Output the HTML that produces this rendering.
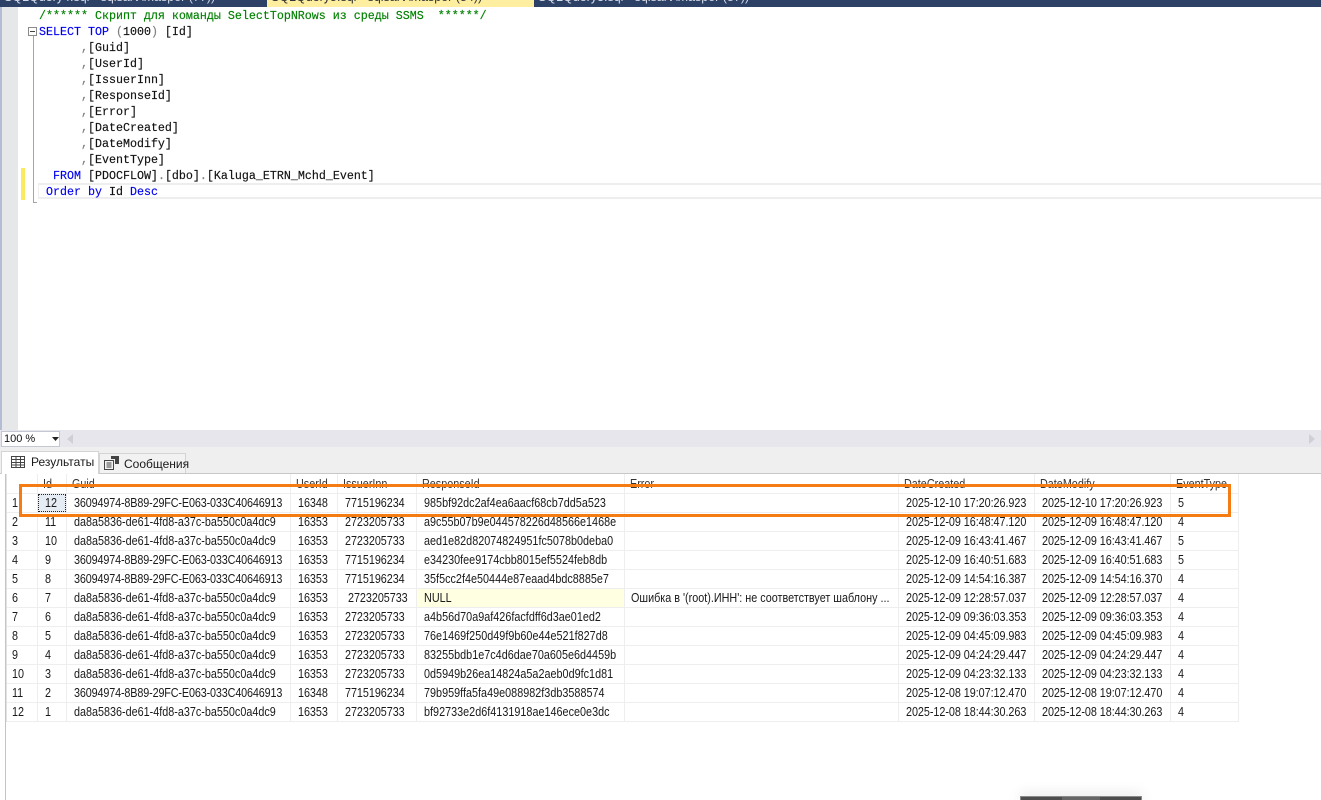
<!DOCTYPE html>
<html><head><meta charset="utf-8">
<style>
html,body{margin:0;padding:0;background:#fff;width:1321px;height:800px;overflow:hidden}
.a{position:absolute}
.c{position:absolute;left:39px;font:11.67px/16px "Liberation Mono",monospace;color:#111;white-space:pre;height:16px;margin-top:1px;-webkit-text-stroke:.15px currentColor}
.k{color:#0000f0}.g{color:#808080}.m{color:#008000}
.t{position:absolute;font:12.5px/19px "Liberation Sans",sans-serif;color:#1a1a1a;white-space:pre;height:19px;letter-spacing:-.05px;transform:scaleX(.864);transform-origin:0 0}
.t[style*="left:74px"]{letter-spacing:0}
.t.u[style*="left:74px"]{letter-spacing:-.157px}
.t[style*="left:424px"]{letter-spacing:.02px}
.t[style*="left:631px"]{letter-spacing:0}
.vl{position:absolute;top:474px;height:248px;width:1px;background:#eeeeee}
.hl{position:absolute;left:7px;width:1232px;height:1px;background:#eeeeee}
.t.h{color:#333;top:475px;letter-spacing:0}
.tt{position:absolute;top:-9px;font:12.5px/12px "Liberation Sans",sans-serif;white-space:pre;color:#d5dbe8}
</style></head><body>
<div id="r" class="a" style="left:0;top:0;width:1321px;height:800px;overflow:hidden">

<div class="a" style="left:0;top:0;width:1321px;height:7px;background:#2d4166"></div>
<div class="a" style="left:267px;top:0;width:267px;height:7px;background:#fdef9f"></div>
<div class="tt" style="left:4px">SQLQuery4.sql - sqlsarv\maspor (77))</div>
<div class="tt" style="left:271px;color:#333">SQLQuery5.sql - sqlsarv\maspor (84))</div>
<div class="tt" style="left:538px">SQLQuery3.sql - sqlsarv\maspor (87))</div>

<div class="a" style="left:0;top:7px;width:2px;height:423px;background:#b4bdd4"></div>
<div class="a" style="left:2px;top:7px;width:16px;height:423px;background:#e6e7e8"></div>
<div class="a" style="left:21px;top:168px;width:4px;height:32px;background:#fbe95f"></div>

<div class="a" style="left:28px;top:27px;width:9px;height:9px;border:1px solid #8a8a8a;box-sizing:border-box;background:#fff"></div>
<div class="a" style="left:30px;top:31px;width:5px;height:1px;background:#444"></div>
<div class="a" style="left:33px;top:36px;width:1px;height:167px;background:#a5a5a5"></div>
<div class="a" style="left:33px;top:202px;width:4px;height:1px;background:#a5a5a5"></div>

<div class="a" style="left:38px;top:183px;width:1283px;height:16px;box-sizing:border-box;border:1px solid #eeeeee;border-width:2px 0 2px 1px"></div>

<div class="c" style="top:7px"><span class="m">/****** Скрипт для команды SelectTopNRows из среды SSMS  ******/</span></div>
<div class="c" style="top:23px"><span class="k">SELECT TOP</span> <span class="g">(</span>1000<span class="g">)</span> [Id]</div>
<div class="c" style="top:39px">      <span class="g">,</span>[Guid]</div>
<div class="c" style="top:55px">      <span class="g">,</span>[UserId]</div>
<div class="c" style="top:71px">      <span class="g">,</span>[IssuerInn]</div>
<div class="c" style="top:87px">      <span class="g">,</span>[ResponseId]</div>
<div class="c" style="top:103px">      <span class="g">,</span>[Error]</div>
<div class="c" style="top:119px">      <span class="g">,</span>[DateCreated]</div>
<div class="c" style="top:135px">      <span class="g">,</span>[DateModify]</div>
<div class="c" style="top:151px">      <span class="g">,</span>[EventType]</div>
<div class="c" style="top:167px">  <span class="k">FROM</span> [PDOCFLOW]<span class="g">.</span>[dbo]<span class="g">.</span>[Kaluga_ETRN_Mchd_Event]</div>
<div class="c" style="top:183px;left:46px"><span class="k">Order by</span> Id <span class="k">Desc</span></div>

<div class="a" style="left:0;top:430px;width:1321px;height:17px;background:#e6e6ec"></div>
<div class="a" style="left:1px;top:431px;width:59px;height:16px;box-sizing:border-box;background:#fff;border:1px solid #c4c8d2"></div>
<div class="a" style="left:4px;top:432px;font:11px/15px 'Liberation Sans',sans-serif;color:#111">100 %</div>
<svg class="a" style="left:52px;top:437px" width="7" height="4"><path d="M0 0H7L3.500 4Z" fill="#222"/></svg>
<svg class="a" style="left:67px;top:434px" width="6" height="10"><path d="M6 0V10L0 5Z" fill="#cfd0d6"/></svg>
<svg class="a" style="left:1309px;top:434px" width="6" height="10"><path d="M0 0V10L6 5Z" fill="#cfd0d6"/></svg>

<div class="a" style="left:0;top:447px;width:1321px;height:26px;background:#efefef"></div>
<div class="a" style="left:0;top:473px;width:1321px;height:1px;background:#c8c8c8"></div>
<div class="a" style="left:0;top:474px;width:6px;height:326px;background:#fff"></div>
<div class="a" style="left:5px;top:474px;width:1px;height:326px;background:#c4c4c4"></div>

<div class="a" style="left:1px;top:451px;width:98px;height:23px;box-sizing:border-box;background:#fff;border:1px solid #d4d4d4;border-bottom:none"></div>
<svg class="a" style="left:11px;top:456px" width="14" height="12"><path d="M.5.5H13.500V11.500H.5ZM.5 3.500H13.500M.5 6.500H13.500M.5 9H13.500M5 .5V11.500M9.500 .5V11.500" fill="none" stroke="#444"/></svg>
<div class="a" style="left:31px;top:453px;font:12px/18px 'Liberation Sans',sans-serif;color:#1a1a1a">Результаты</div>
<div class="a" style="left:99px;top:453px;width:87px;height:20px;box-sizing:border-box;background:#f2f2f2;border:1px solid #d4d4d4;border-bottom:none"></div>
<svg class="a" style="left:104px;top:456px" width="15" height="14"><path d="M.5 4.500H9.500V13.500H.5ZM2.500 7H7.500M2.500 9H7.500M2.500 11H7.500" fill="none" stroke="#444"/><path d="M7 0H15V8H11V3H7Z" fill="#444"/></svg>
<div class="a" style="left:124px;top:455px;font:12px/18px 'Liberation Sans',sans-serif;color:#1a1a1a">Сообщения</div>

<div class="vl" style="left:6px;background:#e2e2e2"></div>
<div class="vl" style="left:37px"></div>
<div class="vl" style="left:66px"></div>
<div class="vl" style="left:290px"></div>
<div class="vl" style="left:337px"></div>
<div class="vl" style="left:416px"></div>
<div class="vl" style="left:624px"></div>
<div class="vl" style="left:898px"></div>
<div class="vl" style="left:1034px"></div>
<div class="vl" style="left:1170px"></div>
<div class="vl" style="left:1238px"></div>
<div class="hl" style="top:493px"></div><div class="hl" style="top:512px"></div><div class="hl" style="top:531px"></div>
<div class="hl" style="top:550px"></div><div class="hl" style="top:569px"></div><div class="hl" style="top:588px"></div>
<div class="hl" style="top:607px"></div><div class="hl" style="top:626px"></div><div class="hl" style="top:645px"></div>
<div class="hl" style="top:664px"></div><div class="hl" style="top:683px"></div><div class="hl" style="top:702px"></div>
<div class="hl" style="top:721px"></div>

<div class="a" style="left:417px;top:589px;width:207px;height:18px;background:#ffffe1"></div>
<div class="a" style="left:38px;top:494px;width:28px;height:18px;box-sizing:border-box;background:#e6ecf3;border:1px dotted #222"></div>

<div class="t h" style="left:43px">Id</div><div class="t h" style="left:72px">Guid</div><div class="t h" style="left:296px">UserId</div><div class="t h" style="left:343px">IssuerInn</div><div class="t h" style="left:422px">ResponseId</div><div class="t h" style="left:630px">Error</div><div class="t h" style="left:904px">DateCreated</div><div class="t h" style="left:1040px">DateModify</div><div class="t h" style="left:1176px">EventType</div>

<div class="t" style="top:494px;left:12px">1</div><div class="t" style="top:494px;left:45px">12</div><div class="t u" style="top:494px;left:74px">36094974-8B89-29FC-E063-033C40646913</div><div class="t" style="top:494px;left:298px">16348</div><div class="t" style="top:494px;left:345px">7715196234</div><div class="t" style="top:494px;left:424px">985bf92dc2af4ea6aacf68cb7dd5a523</div><div class="t" style="top:494px;left:906px">2025-12-10 17:20:26.923</div><div class="t" style="top:494px;left:1042px">2025-12-10 17:20:26.923</div><div class="t" style="top:494px;left:1178px">5</div>

<div class="t" style="top:513px;left:12px">2</div><div class="t" style="top:513px;left:45px">11</div><div class="t" style="top:513px;left:74px">da8a5836-de61-4fd8-a37c-ba550c0a4dc9</div><div class="t" style="top:513px;left:298px">16353</div><div class="t" style="top:513px;left:345px">2723205733</div><div class="t" style="top:513px;left:424px">a9c55b07b9e044578226d48566e1468e</div><div class="t" style="top:513px;left:906px">2025-12-09 16:48:47.120</div><div class="t" style="top:513px;left:1042px">2025-12-09 16:48:47.120</div><div class="t" style="top:513px;left:1178px">4</div>

<div class="t" style="top:532px;left:12px">3</div><div class="t" style="top:532px;left:45px">10</div><div class="t" style="top:532px;left:74px">da8a5836-de61-4fd8-a37c-ba550c0a4dc9</div><div class="t" style="top:532px;left:298px">16353</div><div class="t" style="top:532px;left:345px">2723205733</div><div class="t" style="top:532px;left:424px">aed1e82d82074824951fc5078b0deba0</div><div class="t" style="top:532px;left:906px">2025-12-09 16:43:41.467</div><div class="t" style="top:532px;left:1042px">2025-12-09 16:43:41.467</div><div class="t" style="top:532px;left:1178px">5</div>

<div class="t" style="top:551px;left:12px">4</div><div class="t" style="top:551px;left:45px">9</div><div class="t u" style="top:551px;left:74px">36094974-8B89-29FC-E063-033C40646913</div><div class="t" style="top:551px;left:298px">16353</div><div class="t" style="top:551px;left:345px">7715196234</div><div class="t" style="top:551px;left:424px">e34230fee9174cbb8015ef5524feb8db</div><div class="t" style="top:551px;left:906px">2025-12-09 16:40:51.683</div><div class="t" style="top:551px;left:1042px">2025-12-09 16:40:51.683</div><div class="t" style="top:551px;left:1178px">5</div>

<div class="t" style="top:570px;left:12px">5</div><div class="t" style="top:570px;left:45px">8</div><div class="t u" style="top:570px;left:74px">36094974-8B89-29FC-E063-033C40646913</div><div class="t" style="top:570px;left:298px">16353</div><div class="t" style="top:570px;left:345px">7715196234</div><div class="t" style="top:570px;left:424px">35f5cc2f4e50444e87eaad4bdc8885e7</div><div class="t" style="top:570px;left:906px">2025-12-09 14:54:16.387</div><div class="t" style="top:570px;left:1042px">2025-12-09 14:54:16.370</div><div class="t" style="top:570px;left:1178px">4</div>

<div class="t" style="top:589px;left:12px">6</div><div class="t" style="top:589px;left:45px">7</div><div class="t" style="top:589px;left:74px">da8a5836-de61-4fd8-a37c-ba550c0a4dc9</div><div class="t" style="top:589px;left:298px">16353</div><div class="t" style="top:589px;left:348px">2723205733</div><div class="t" style="top:589px;left:424px">NULL</div><div class="t" style="top:589px;left:631px">Ошибка в '(root).ИНН': не соответствует шаблону ...</div><div class="t" style="top:589px;left:906px">2025-12-09 12:28:57.037</div><div class="t" style="top:589px;left:1042px">2025-12-09 12:28:57.037</div><div class="t" style="top:589px;left:1178px">4</div>

<div class="t" style="top:608px;left:12px">7</div><div class="t" style="top:608px;left:45px">6</div><div class="t" style="top:608px;left:74px">da8a5836-de61-4fd8-a37c-ba550c0a4dc9</div><div class="t" style="top:608px;left:298px">16353</div><div class="t" style="top:608px;left:345px">2723205733</div><div class="t" style="top:608px;left:424px">a4b56d70a9af426facfdff6d3ae01ed2</div><div class="t" style="top:608px;left:906px">2025-12-09 09:36:03.353</div><div class="t" style="top:608px;left:1042px">2025-12-09 09:36:03.353</div><div class="t" style="top:608px;left:1178px">4</div>

<div class="t" style="top:627px;left:12px">8</div><div class="t" style="top:627px;left:45px">5</div><div class="t" style="top:627px;left:74px">da8a5836-de61-4fd8-a37c-ba550c0a4dc9</div><div class="t" style="top:627px;left:298px">16353</div><div class="t" style="top:627px;left:345px">2723205733</div><div class="t" style="top:627px;left:424px">76e1469f250d49f9b60e44e521f827d8</div><div class="t" style="top:627px;left:906px">2025-12-09 04:45:09.983</div><div class="t" style="top:627px;left:1042px">2025-12-09 04:45:09.983</div><div class="t" style="top:627px;left:1178px">4</div>

<div class="t" style="top:646px;left:12px">9</div><div class="t" style="top:646px;left:45px">4</div><div class="t" style="top:646px;left:74px">da8a5836-de61-4fd8-a37c-ba550c0a4dc9</div><div class="t" style="top:646px;left:298px">16353</div><div class="t" style="top:646px;left:345px">2723205733</div><div class="t" style="top:646px;left:424px">83255bdb1e7c4d6dae70a605e6d4459b</div><div class="t" style="top:646px;left:906px">2025-12-09 04:24:29.447</div><div class="t" style="top:646px;left:1042px">2025-12-09 04:24:29.447</div><div class="t" style="top:646px;left:1178px">4</div>

<div class="t" style="top:665px;left:12px">10</div><div class="t" style="top:665px;left:45px">3</div><div class="t" style="top:665px;left:74px">da8a5836-de61-4fd8-a37c-ba550c0a4dc9</div><div class="t" style="top:665px;left:298px">16353</div><div class="t" style="top:665px;left:345px">2723205733</div><div class="t" style="top:665px;left:424px">0d5949b26ea14824a5a2aeb0d9fc1d81</div><div class="t" style="top:665px;left:906px">2025-12-09 04:23:32.133</div><div class="t" style="top:665px;left:1042px">2025-12-09 04:23:32.133</div><div class="t" style="top:665px;left:1178px">4</div>

<div class="t" style="top:684px;left:12px">11</div><div class="t" style="top:684px;left:45px">2</div><div class="t u" style="top:684px;left:74px">36094974-8B89-29FC-E063-033C40646913</div><div class="t" style="top:684px;left:298px">16348</div><div class="t" style="top:684px;left:345px">7715196234</div><div class="t" style="top:684px;left:424px">79b959ffa5fa49e088982f3db3588574</div><div class="t" style="top:684px;left:906px">2025-12-08 19:07:12.470</div><div class="t" style="top:684px;left:1042px">2025-12-08 19:07:12.470</div><div class="t" style="top:684px;left:1178px">4</div>

<div class="t" style="top:703px;left:12px">12</div><div class="t" style="top:703px;left:45px">1</div><div class="t" style="top:703px;left:74px">da8a5836-de61-4fd8-a37c-ba550c0a4dc9</div><div class="t" style="top:703px;left:298px">16353</div><div class="t" style="top:703px;left:345px">2723205733</div><div class="t" style="top:703px;left:424px">bf92733e2d6f4131918ae146ece0e3dc</div><div class="t" style="top:703px;left:906px">2025-12-08 18:44:30.263</div><div class="t" style="top:703px;left:1042px">2025-12-08 18:44:30.263</div><div class="t" style="top:703px;left:1178px">4</div>

<div class="a" style="left:19px;top:484px;width:1212px;height:33px;box-sizing:border-box;border:3px solid #f57c12"></div>

<div class="a" style="left:1020px;top:796px;width:122px;height:4px;box-sizing:border-box;background:#4d4d4d;border:1px solid #8a8a8a;border-bottom:none;box-shadow:0 0 14px rgba(0,0,0,.22)"></div>
<div class="a" style="left:1062px;top:797px;width:38px;height:3px;background:#666"></div>
</div>
</body></html>
